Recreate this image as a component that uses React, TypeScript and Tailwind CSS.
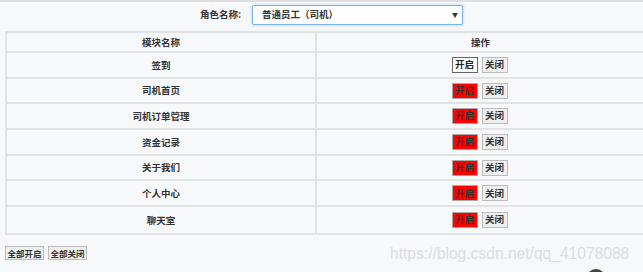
import React from 'react';

const modules = ['签到', '司机首页', '司机订单管理', '资金记录', '关于我们', '个人中心', '聊天室'];

const cjk = { fontFamily: '"Noto Sans CJK SC", "Noto Sans", sans-serif' };

export default function App() {
  return (
    <div className="relative w-[643px] h-[272px] overflow-hidden bg-[#f7f8fa]" style={cjk}>
      <div className="h-[2px] bg-[#dedfe2]" />

      {/* role select */}
      <div className="flex items-center h-[25px] pl-[200px]">
        <span className="text-[9.5px] font-bold text-[#333] w-[52px]">角色名称:</span>
        <div className="flex items-center justify-between w-[211px] h-[20px] bg-white border border-[#79b4ea] rounded-[2px] shadow-[0_0_3px_rgba(102,175,233,0.6)] pl-[9px] pr-[4px]">
          <span className="text-[9.5px] font-bold text-[#333]">普通员工（司机）</span>
          <span className="text-[6px] text-[#333]">▼</span>
        </div>
      </div>

      {/* table */}
      <div className="ml-[5px] mt-[4px] w-[645px] border-2 border-r-0 border-[#e1e2e4]">
        <div className="flex h-[20px] border-b-2 border-[#e1e2e4]">
          <div className="w-[310px] border-r-2 border-[#e1e2e4] flex items-center justify-center text-[9.5px] font-bold text-[#333]">模块名称</div>
          <div className="flex-1 flex items-center justify-center pr-[6px] text-[9.5px] font-bold text-[#333]">操作</div>
        </div>
        {modules.map((m, i) => (
          <div key={m} className={`flex h-[25.7px] ${i < modules.length - 1 ? 'border-b-2 border-[#e1e2e4]' : ''}`}>
            <div className="w-[310px] border-r-2 border-[#e1e2e4] flex items-center justify-center text-[9.5px] font-bold text-[#333]">{m}</div>
            <div className="flex-1 flex items-center justify-center gap-[4px] pr-[8px]">
              <button
                className={`w-[26px] h-[16px] text-[9.5px] font-bold leading-none flex items-center justify-center border ${
                  i === 0 ? 'bg-white border-[#666] text-[#222]' : 'bg-[#ff0000] border-[#aaa] text-[#333]'
                }`}
              >
                开启
              </button>
              <button className="w-[26px] h-[16px] text-[9.5px] font-bold leading-none flex items-center justify-center bg-[#efefef] border border-[#bbb] text-[#333]">
                关闭
              </button>
            </div>
          </div>
        ))}
      </div>

      {/* bulk buttons */}
      <div className="flex gap-[4px] ml-[5px] mt-[11px]">
        <button className="w-[39px] h-[14px] text-[8.5px] font-bold leading-none flex items-center justify-center bg-[#efefef] border border-[#bbb] text-[#333]">全部开启</button>
        <button className="w-[39px] h-[14px] text-[8.5px] font-bold leading-none flex items-center justify-center bg-[#efefef] border border-[#bbb] text-[#333]">全部关闭</button>
      </div>

      {/* watermark */}
      <div
        className="absolute left-[390px] top-[242px] text-[15.6px] text-[#dcdde0]"
        style={{ fontFamily: '"Liberation Sans", Arial, sans-serif' }}
      >
        https://blog.csdn.net/qq_41078088
      </div>
      <div className="absolute left-[586px] top-[269px] w-[20px] h-[20px] rounded-full bg-[#444]" />
    </div>
  );
}
